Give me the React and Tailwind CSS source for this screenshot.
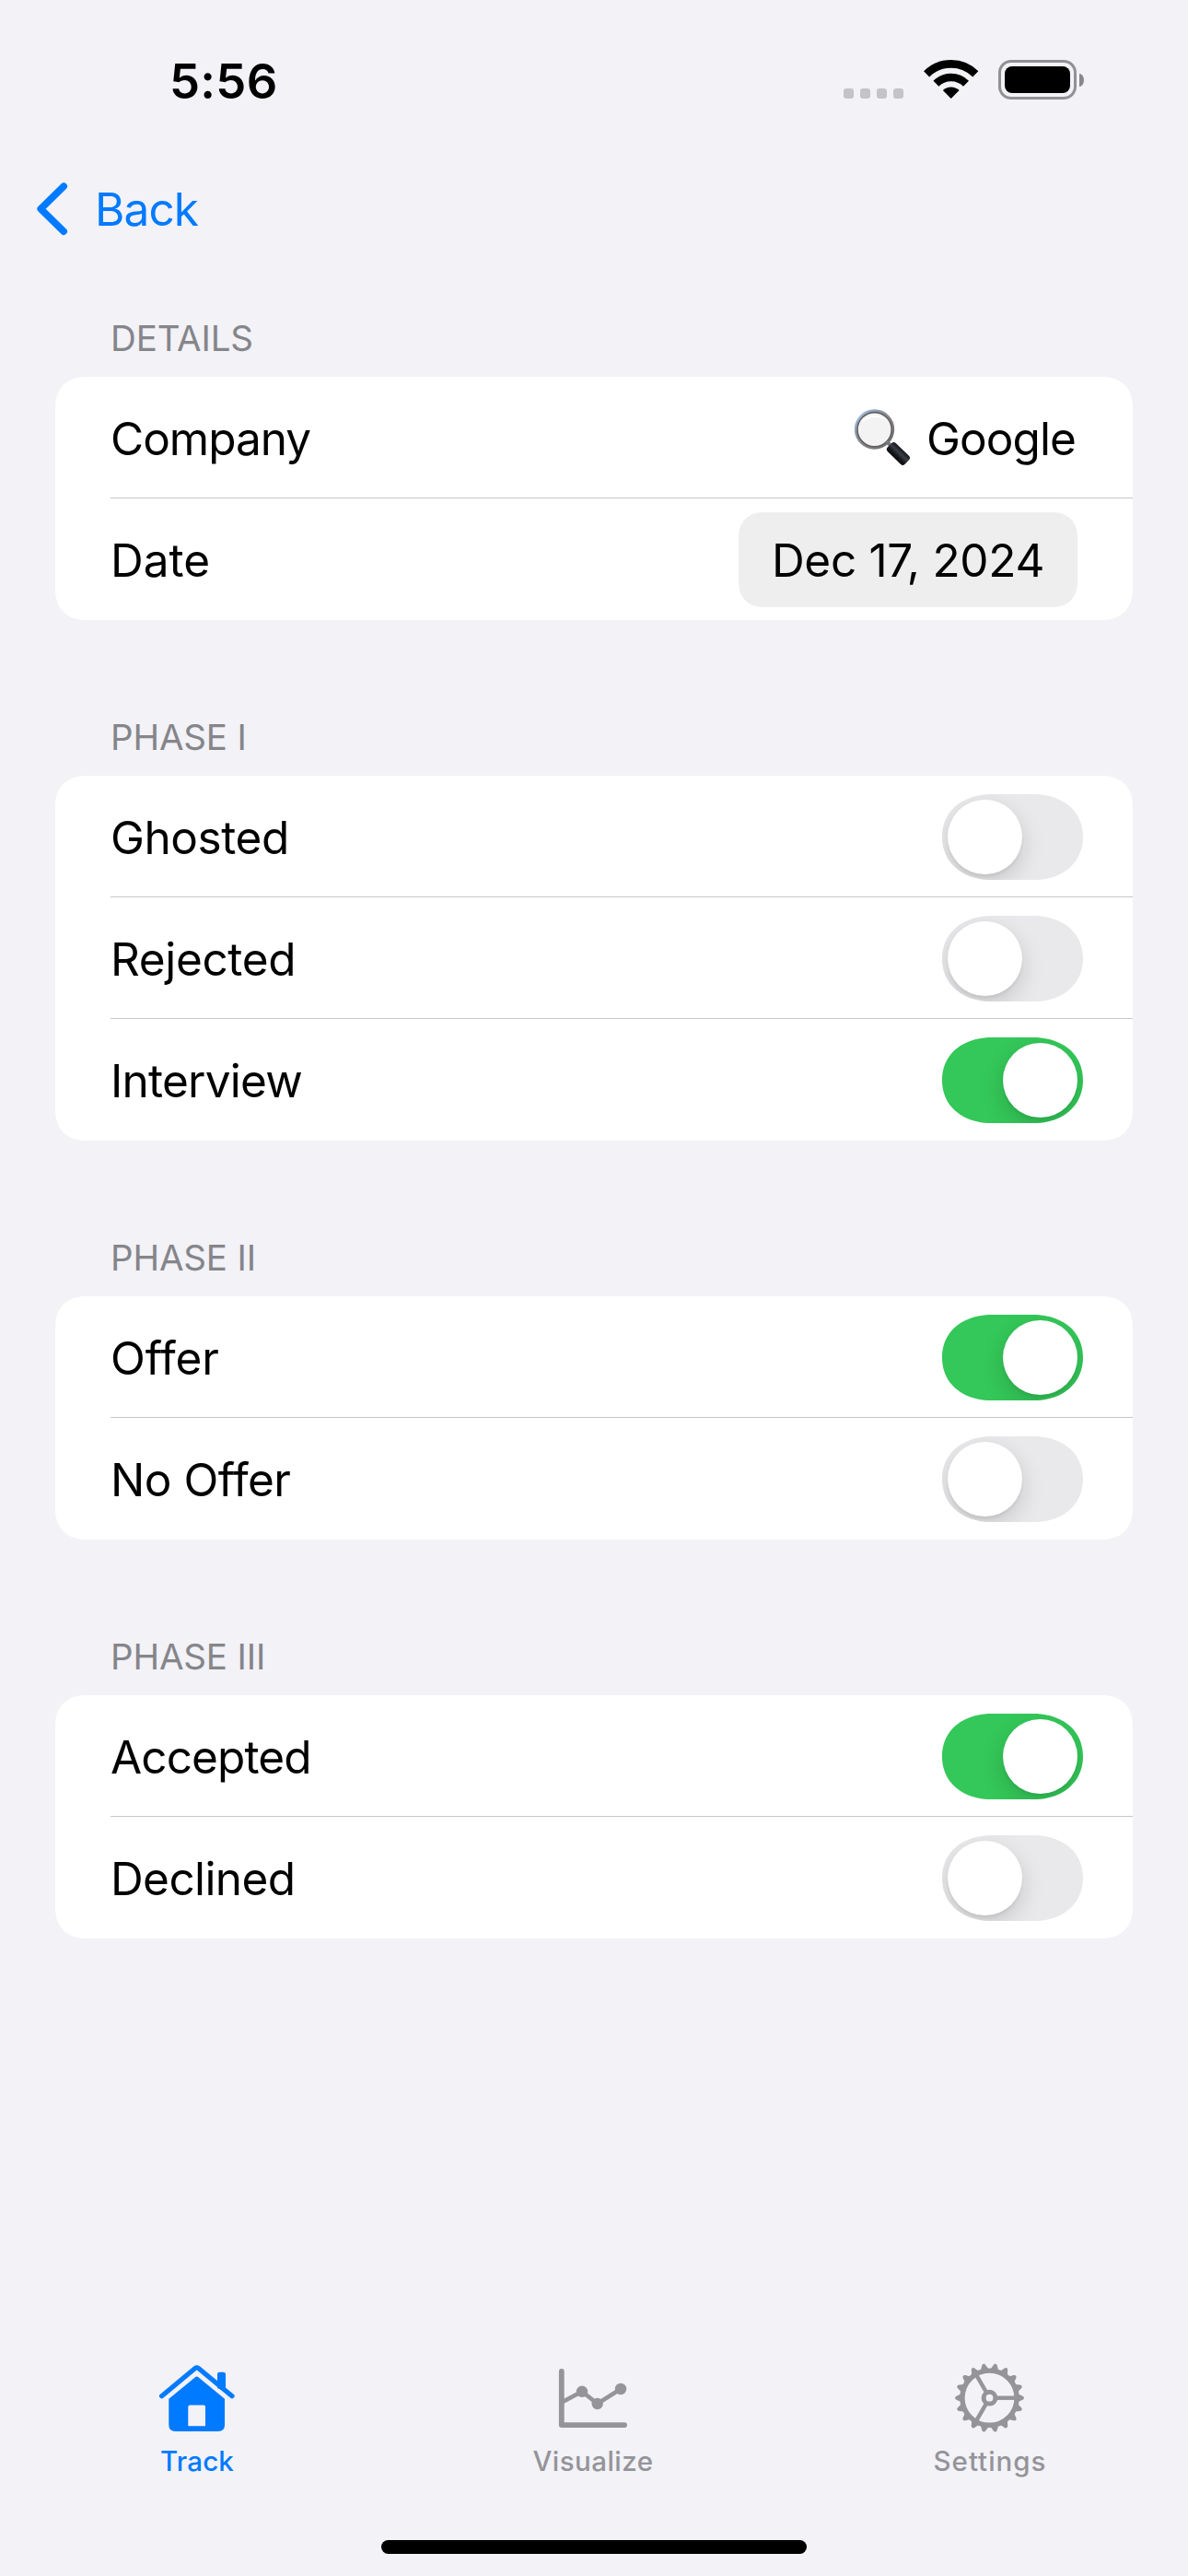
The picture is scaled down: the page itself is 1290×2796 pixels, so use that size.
import React, { useState } from "react";

const sections = [
  {
    title: "PHASE I",
    rows: [
      { label: "Ghosted", tracking: "tracking-[-0.45px]", on: false },
      { label: "Rejected", tracking: "tracking-[-0.35px]", on: false },
      { label: "Interview", tracking: "tracking-[-0.75px]", on: true },
    ],
  },
  {
    title: "PHASE II",
    rows: [
      { label: "Offer", tracking: "tracking-[-0.2px]", on: true },
      { label: "No Offer", tracking: "tracking-[-0.5px]", on: false },
    ],
  },
  {
    title: "PHASE III",
    rows: [
      { label: "Accepted", tracking: "tracking-[-0.9px]", on: true },
      { label: "Declined", tracking: "tracking-[-0.6px]", on: false },
    ],
  },
];

function WifiIcon() {
  return (
    <svg width="60" height="44" viewBox="0 0 60 44" fill="none" aria-hidden="true">
      <path d="M3.1 16.4 A37.6 37.6 0 0 1 56.3 16.4" stroke="#000" strokeWidth="8.6" />
      <path d="M13.4 26.7 A23 23 0 0 1 46 26.7" stroke="#000" strokeWidth="8.4" />
      <path d="M20.8 34 A12.8 12.8 0 0 1 38.6 34 L29.7 43 Z" fill="#000" />
    </svg>
  );
}

function Battery() {
  return (
    <div className="flex items-center gap-[3px]">
      <div className="h-[43px] w-[85px] rounded-[14px] border-[3px] border-[#919195] p-[4px]">
        <div className="h-full w-full rounded-[8px] bg-black" />
      </div>
      <div className="h-[14px] w-[5px] rounded-r-[5px_7px] bg-[#88888c]" />
    </div>
  );
}

function StatusBar() {
  return (
    <header className="flex h-[173px] items-start justify-between pr-[113px] pl-[184px]">
      <span className="mt-[56px] text-[52.5px]/[64px] font-semibold tracking-[0.3px]">5:56</span>
      <div className="mt-[64px] flex items-start">
        <div className="mt-[32px] mr-[22px] flex gap-[7px]">
          {[0, 1, 2, 3].map((i) => (
            <span key={i} className="size-[11px] rounded-[3px] bg-[#c3c3c8]" />
          ))}
        </div>
        <WifiIcon />
        <div className="mt-px ml-[21px]">
          <Battery />
        </div>
      </div>
    </header>
  );
}

function MagnifierIcon() {
  return (
    <svg width="64" height="66" viewBox="0 0 64 66" role="img" aria-label="Magnifying glass">
      <defs>
        <linearGradient id="rim" x1="0" y1="0" x2="1" y2="1">
          <stop offset="0" stopColor="#a5cdf5" />
          <stop offset="0.3" stopColor="#8f9aa6" />
          <stop offset="0.6" stopColor="#8a7f80" />
          <stop offset="1" stopColor="#6c6c6c" />
        </linearGradient>
        <linearGradient id="grip" x1="0" y1="0" x2="0" y2="1">
          <stop offset="0" stopColor="#15171b" />
          <stop offset="0.4" stopColor="#3a3e46" />
          <stop offset="0.65" stopColor="#1b1d21" />
          <stop offset="1" stopColor="#050506" />
        </linearGradient>
      </defs>
      <circle cx="23.5" cy="24" r="20.2" fill="#f3f3f3" stroke="url(#rim)" strokeWidth="3" />
      <circle cx="23.6" cy="24.2" r="18.6" fill="#f3f3f3" stroke="#5d5f62" strokeWidth="1.6" />
      <path d="M10 17 A15.5 15.5 0 0 1 36 15 A20 20 0 0 0 10 17 Z" fill="#fff" />
      <path d="M36.5 37 L41 41.5" stroke="#77797c" strokeWidth="4" />
      <rect x="-13.2" y="-6.4" width="26.4" height="12.8" rx="3.6" fill="url(#grip)" transform="translate(49.4 50.4) rotate(44)" />
    </svg>
  );
}

function Toggle({ label, initial }) {
  const [on, setOn] = useState(initial);
  return (
    <button
      type="button"
      role="switch"
      aria-checked={on}
      aria-label={label}
      onClick={() => setOn(!on)}
      className={`flex h-[93px] w-[153px] items-center overflow-hidden rounded-[54px/46.5px] p-[6px] [corner-shape:superellipse(1.1)] ${
        on ? "justify-end bg-[#34c759]" : "justify-start bg-[#e9e9eb]"
      }`}
    >
      <span className="size-[81px] rounded-full bg-white shadow-[0_9px_24px_rgba(0,0,0,0.15),0_3px_3px_rgba(0,0,0,0.05)]" />
    </button>
  );
}

function Section({ title, children }) {
  return (
    <section>
      <h2 className="mb-[19px] pl-[60px] text-[38.5px]/[46px] tracking-[-0.15px] text-[#85858a]">{title}</h2>
      <div className="overflow-hidden rounded-[34px] bg-white [corner-shape:superellipse(1.2)]">{children}</div>
    </section>
  );
}

function Row({ label, tracking, last, children }) {
  return (
    <div className="pl-[60px]">
      <div className={`flex h-[132px] items-center justify-between ${last ? "" : "border-b border-[#c6c6c8]"}`}>
        <span className={`pt-[2px] text-[49.5px]/[60px] ${tracking}`}>{label}</span>
        {children}
      </div>
    </div>
  );
}

function HouseIcon() {
  return (
    <svg width="90" height="80" viewBox="0 0 90 80" fill="none" aria-hidden="true">
      <path d="M66 30 V15 Q66 12.7 68.3 12.7 H72.6 Q75 12.7 75 15 V34 Z" fill="currentColor" />
      <path d="M5.6 38.7 L41.6 8.7 Q43.7 7.1 45.8 8.7 L82 38.7" stroke="currentColor" strokeWidth="5.2" strokeLinecap="round" strokeLinejoin="round" />
      <path
        fillRule="evenodd"
        d="M13.3 41.8 L42 18.2 Q43.7 16.9 45.4 18.2 L74 41.8 V70 Q74 77 67 77 H20.3 Q13.3 77 13.3 70 Z M34.3 71.3 H53 V50.5 Q53 48.6 51.1 48.6 H36.2 Q34.3 48.6 34.3 50.5 Z"
        fill="currentColor"
      />
    </svg>
  );
}

function ChartIcon() {
  return (
    <svg width="90" height="80" viewBox="0 0 90 80" fill="none" stroke="currentColor" aria-hidden="true">
      <path d="M9.8 11.9 V70.1 H78.1" strokeWidth="5.8" strokeLinecap="round" strokeLinejoin="round" />
      <path d="M10 45.6 L32 33.7 L48.7 47 L74 31" strokeWidth="4.6" />
      <g fill="currentColor" stroke="none">
        <circle cx="32" cy="33.8" r="6.2" />
        <circle cx="48.7" cy="47" r="6.2" />
        <circle cx="74" cy="31" r="6.2" />
      </g>
    </svg>
  );
}

const teeth = Array.from({ length: 18 }, (_, i) => i * 20);

function GearIcon() {
  return (
    <svg width="90" height="80" viewBox="0 0 90 80" fill="none" stroke="currentColor" aria-hidden="true">
      <g transform="translate(44.5 40.7)">
        <circle r="29.6" strokeWidth="5.4" />
        <circle r="6.4" strokeWidth="5" />
        {[0, 120, 240].map((a) => (
          <path key={a} d="M8 0 H28" strokeWidth="4.4" transform={`rotate(${a})`} />
        ))}
        {teeth.map((a) => (
          <path key={a} d="M31 -4.4 L36 -2 Q37.4 -1.4 37.4 0 Q37.4 1.4 36 2 L31 4.4 Z" fill="currentColor" stroke="none" transform={`rotate(${a})`} />
        ))}
      </g>
    </svg>
  );
}

const tabs = [
  { label: "Track", Icon: HouseIcon, style: "text-[#007aff]", text: "pr-[2px] tracking-[0.2px]" },
  { label: "Visualize", Icon: ChartIcon, style: "text-[#949499]", text: "pr-[2px] tracking-[0.45px]" },
  { label: "Settings", Icon: GearIcon, style: "text-[#949499]", text: "tracking-[1px]" },
];

export default function App() {
  return (
    <div className="flex h-[2796px] w-[1290px] flex-col bg-[#f2f2f7] font-['Inter','Liberation_Sans',sans-serif] text-black">
      <StatusBar />

      <nav className="flex h-[171px] items-start pl-[38px] text-[#007aff]">
        <button type="button" className="flex items-start">
          <svg className="mt-[23px]" width="40" height="62" viewBox="0 0 40 62" fill="none" aria-hidden="true">
            <path d="M31.2 6.2 L6.2 30.7 L31.2 55.2" stroke="currentColor" strokeWidth="7.6" strokeLinecap="round" strokeLinejoin="round" />
          </svg>
          <span className="mt-[24px] ml-[25px] text-[49.5px]/[60px] tracking-[-0.9px]">Back</span>
        </button>
      </nav>

      <main className="flex flex-1 flex-col gap-[104px] px-[60px]">
        <Section title="DETAILS">
          <Row label="Company" tracking="tracking-[-1px]">
            <div className="flex items-center gap-[16px] pr-[62px]">
              <MagnifierIcon />
              <span className="pt-[2px] text-[49.5px]/[60px] tracking-[-0.9px]">Google</span>
            </div>
          </Row>
          <Row label="Date" tracking="tracking-normal" last>
            <button type="button" className="mt-px mr-[60px] flex h-[103px] w-[368px] items-center justify-center rounded-[28px] bg-[#eeeeee] [corner-shape:superellipse(1.2)]">
              <span className="pt-px text-[49.5px]/[60px] tracking-[-0.3px] whitespace-nowrap">Dec 17, 2024</span>
            </button>
          </Row>
        </Section>

        {sections.map(({ title, rows }) => (
          <Section key={title} title={title}>
            {rows.map(({ label, tracking, on }, i) => (
              <Row key={label} label={label} tracking={tracking} last={i === rows.length - 1}>
                <div className="mt-px mr-[54px]">
                  <Toggle label={label} initial={on} />
                </div>
              </Row>
            ))}
          </Section>
        ))}
      </main>

      <footer className="flex h-[234px] flex-col items-center">
        <div className="grid w-full grid-cols-3">
          {tabs.map(({ label, Icon, style, text }) => (
            <button key={label} type="button" className={`flex flex-col items-center ${style}`}>
              <Icon />
              <span className={`mt-[11px] text-[29.5px]/[36px] font-medium ${text}`}>{label}</span>
            </button>
          ))}
        </div>
        <div className="mt-[68px] h-[15px] w-[462px] rounded-full bg-black" />
      </footer>
    </div>
  );
}
